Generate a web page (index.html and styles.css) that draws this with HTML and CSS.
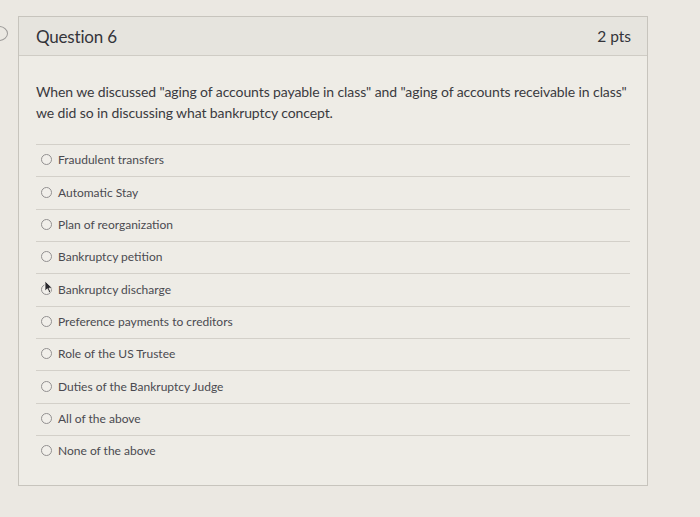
FILE: index.html
```html
<!DOCTYPE html>
<html lang="en">
<head>
<meta charset="utf-8">
<title>Question 6</title>
<link rel="stylesheet" href="styles.css">
</head>
<body>
<div class="page">
  <span class="prev-mark" aria-hidden="true"></span>
  <section class="card">
    <header class="card-head">
      <h2 class="q-title">Question 6</h2>
      <span class="q-pts">2 pts</span>
    </header>
    <div class="card-body">
      <p class="q-text">When we discussed "aging of accounts payable in class" and "aging of accounts receivable in class" we did so in discussing what bankruptcy concept.</p>
      <ul class="answers">
        <li class="answer"><span class="radio"></span><span class="label">Fraudulent transfers</span></li>
        <li class="answer"><span class="radio"></span><span class="label">Automatic Stay</span></li>
        <li class="answer"><span class="radio"></span><span class="label">Plan of reorganization</span></li>
        <li class="answer"><span class="radio"></span><span class="label">Bankruptcy petition</span></li>
        <li class="answer"><span class="radio"></span><svg class="cursor" width="10" height="14" viewBox="0 0 10 14" aria-hidden="true"><path d="M1 1 L1 11 L3.4 8.8 L5.2 12.8 L6.8 12 L5 8.2 L8.4 8.2 Z" fill="#2a2a2e" stroke="#f2f0ea" stroke-width="0.8" stroke-linejoin="round"/></svg><span class="label">Bankruptcy discharge</span></li>
        <li class="answer"><span class="radio"></span><span class="label">Preference payments to creditors</span></li>
        <li class="answer"><span class="radio"></span><span class="label">Role of the US Trustee</span></li>
        <li class="answer"><span class="radio"></span><span class="label">Duties of the Bankruptcy Judge</span></li>
        <li class="answer"><span class="radio"></span><span class="label">All of the above</span></li>
        <li class="answer"><span class="radio"></span><span class="label">None of the above</span></li>
      </ul>
    </div>
  </section>
</div>
</body>
</html>
```

FILE: styles.css
```css
* { box-sizing: border-box; }

html, body {
  margin: 0;
  padding: 0;
  background: #ebe8e2;
  font-family: Lato, "Open Sans", "Liberation Sans", sans-serif;
}

.page {
  position: relative;
  width: 700px;
  height: 517px;
  padding: 16px 0 0 18px;
}

.prev-mark {
  position: absolute;
  left: -10px;
  top: 26px;
  width: 18px;
  height: 15px;
  border: 1.5px solid #9c9a98;
  border-radius: 50%;
}

.card {
  width: 630px;
  height: 470px;
  border: 1px solid #c7c4bd;
  background: #eeece6;
}

.card-head {
  display: flex;
  align-items: center;
  justify-content: space-between;
  height: 39px;
  padding: 0 16px 0 17px;
  background: #e6e4de;
  border-bottom: 1px solid #cfccc5;
}

.q-title {
  margin: 0;
  font-size: 17px;
  font-weight: 400;
  color: #34343a;
  letter-spacing: -0.2px;
}

.q-pts {
  font-size: 15.5px;
  color: #34343a;
}

.card-body {
  padding: 25px 17px 0 17px;
}

.q-text {
  margin: 0 0 21px 0;
  font-size: 14px;
  line-height: 21px;
  color: #3a3a40;
  letter-spacing: -0.1px;
}

.answers {
  list-style: none;
  margin: 0;
  padding: 0;
}

.answer {
  position: relative;
  display: flex;
  align-items: center;
  height: 32.35px;
  border-top: 1px solid #d3d0c9;
  padding: 0 0 2px 5px;
}

.radio {
  width: 11px;
  height: 11px;
  border: 1px solid #929090;
  border-radius: 50%;
  background: #f1efea;
  margin-right: 6px;
  flex: none;
}

.label {
  font-size: 12px;
  color: #4a4a50;
}

.cursor {
  position: absolute;
  left: 8px;
  top: 6px;
}
```
